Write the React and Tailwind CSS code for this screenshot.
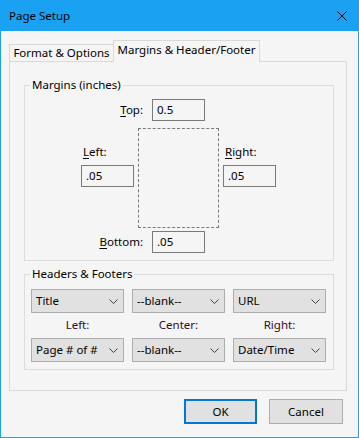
import React from 'react';

const font = { fontFamily: '"Noto Sans", "Open Sans", sans-serif' };

function Chevron() {
  return (
    <svg width="9" height="5" viewBox="0 0 9 5" className="shrink-0">
      <path d="M0.5 0.5 L4.5 4.5 L8.5 0.5" fill="none" stroke="#404040" strokeWidth="1" />
    </svg>
  );
}

function Select({ value }) {
  return (
    <div className="w-[93px] h-[24px] bg-[#e1e1e1] border border-[#adadad] flex items-center justify-between pl-[4px] pr-[5px] text-[11.5px] leading-[16px] text-black">
      <span>{value}</span>
      <Chevron />
    </div>
  );
}

function Field({ value }) {
  return (
    <div className="w-[53px] h-[22px] bg-[#f5f5f5] border border-[#7a7a7a] flex items-center pl-[4px] text-[11.5px] leading-[16px] text-black">
      {value}
    </div>
  );
}

function GroupBox({ title, className, children }) {
  return (
    <div className={`relative border border-[#dcdcdc] ${className}`}>
      <span className="absolute -top-[9px] left-[5px] px-[2px] bg-[#f5f5f5] text-[11.5px] leading-[16px] text-black">
        {title}
      </span>
      {children}
    </div>
  );
}

export default function App() {
  return (
    <div className="w-[359px] h-[438px] bg-[#1ba1f2] flex flex-col px-[1px] pb-[1px]" style={font}>
      {/* title bar */}
      <div className="h-[31px] flex items-center justify-between pl-[8px] pr-[11px] shrink-0">
        <span className="text-[11.5px] leading-[16px] text-black">Page Setup</span>
        <svg width="10" height="10" viewBox="0 0 10 10">
          <path d="M0.5 0.5 L9.5 9.5 M9.5 0.5 L0.5 9.5" stroke="#000" strokeWidth="1" />
        </svg>
      </div>

      <div className="flex-1 bg-[#f5f5f5] flex flex-col">
        {/* tabs */}
        <div className="flex items-end h-[22px] mt-[8px] pl-[8px] relative z-10">
          <div className="w-[104px] h-[17px] border-t border-l border-[#d9d9d9] flex items-center justify-center text-[11.5px] leading-[16px] text-black">
            Format &amp; Options
          </div>
          <div className="w-[147px] h-[22px] -mb-[1px] border-t border-l border-r border-[#d9d9d9] bg-[#f5f5f5] flex items-start justify-center pt-[1px] text-[11.5px] leading-[16px] text-black">
            Margins &amp; Header/Footer
          </div>
        </div>

        {/* panel */}
        <div className="ml-[8px] w-[338px] h-[330px] border border-[#d9d9d9] flex flex-col">
          <GroupBox title="Margins (inches)" className="mt-[23px] ml-[14px] w-[310px] h-[176px]">
            <div className="flex flex-col text-[11.5px] leading-[16px] text-black">
              <div className="flex items-center mt-[13px]">
                <span className="w-[118px] text-right"><u className="underline-offset-2">T</u>op:</span>
                <div className="ml-[9px]"><Field value="0.5" /></div>
              </div>
              <div className="flex items-start mt-[7px] ml-[56px]">
                <div className="flex flex-col mt-[16px]">
                  <span className="pl-[2px] h-[16px]"><u className="underline-offset-2">L</u>eft:</span>
                  <div className="mt-[5px]"><Field value=".05" /></div>
                </div>
                <div className="ml-[4px] w-[81px] h-[100px] border border-dashed border-[#7a7a7a]" />
                <div className="flex flex-col mt-[16px] ml-[4px]">
                  <span className="pl-[2px] h-[16px]"><u className="underline-offset-2">R</u>ight:</span>
                  <div className="mt-[5px]"><Field value=".05" /></div>
                </div>
              </div>
              <div className="flex items-center mt-[3px]">
                <span className="w-[118px] text-right"><u className="underline-offset-2">B</u>ottom:</span>
                <div className="ml-[9px]"><Field value=".05" /></div>
              </div>
            </div>
          </GroupBox>

          <GroupBox title="Headers &amp; Footers" className="mt-[13px] ml-[14px] w-[310px] h-[96px]">
            <div className="flex flex-col pl-[6px] mt-[14px]">
              <div className="flex gap-[8px]">
                <Select value="Title" />
                <Select value="--blank--" />
                <Select value="URL" />
              </div>
              <div className="flex gap-[8px] mt-[4px] text-[11.5px] leading-[16px] text-[#300a2a]">
                <span className="w-[93px] text-center">Left:</span>
                <span className="w-[93px] text-center">Center:</span>
                <span className="w-[93px] text-center">Right:</span>
              </div>
              <div className="flex gap-[8px] mt-[5px]">
                <Select value="Page # of #" />
                <Select value="--blank--" />
                <Select value="Date/Time" />
              </div>
            </div>
          </GroupBox>
        </div>

        {/* buttons */}
        <div className="flex justify-end gap-[12px] mt-[8px] pr-[15px]">
          <button className="w-[73px] h-[25px] bg-[#e1e1e1] border-2 border-[#0078d7] text-[11.5px] leading-[16px] text-black">OK</button>
          <button className="w-[74px] h-[25px] bg-[#e1e1e1] border border-[#adadad] text-[11.5px] leading-[16px] text-black">Cancel</button>
        </div>
      </div>
    </div>
  );
}
